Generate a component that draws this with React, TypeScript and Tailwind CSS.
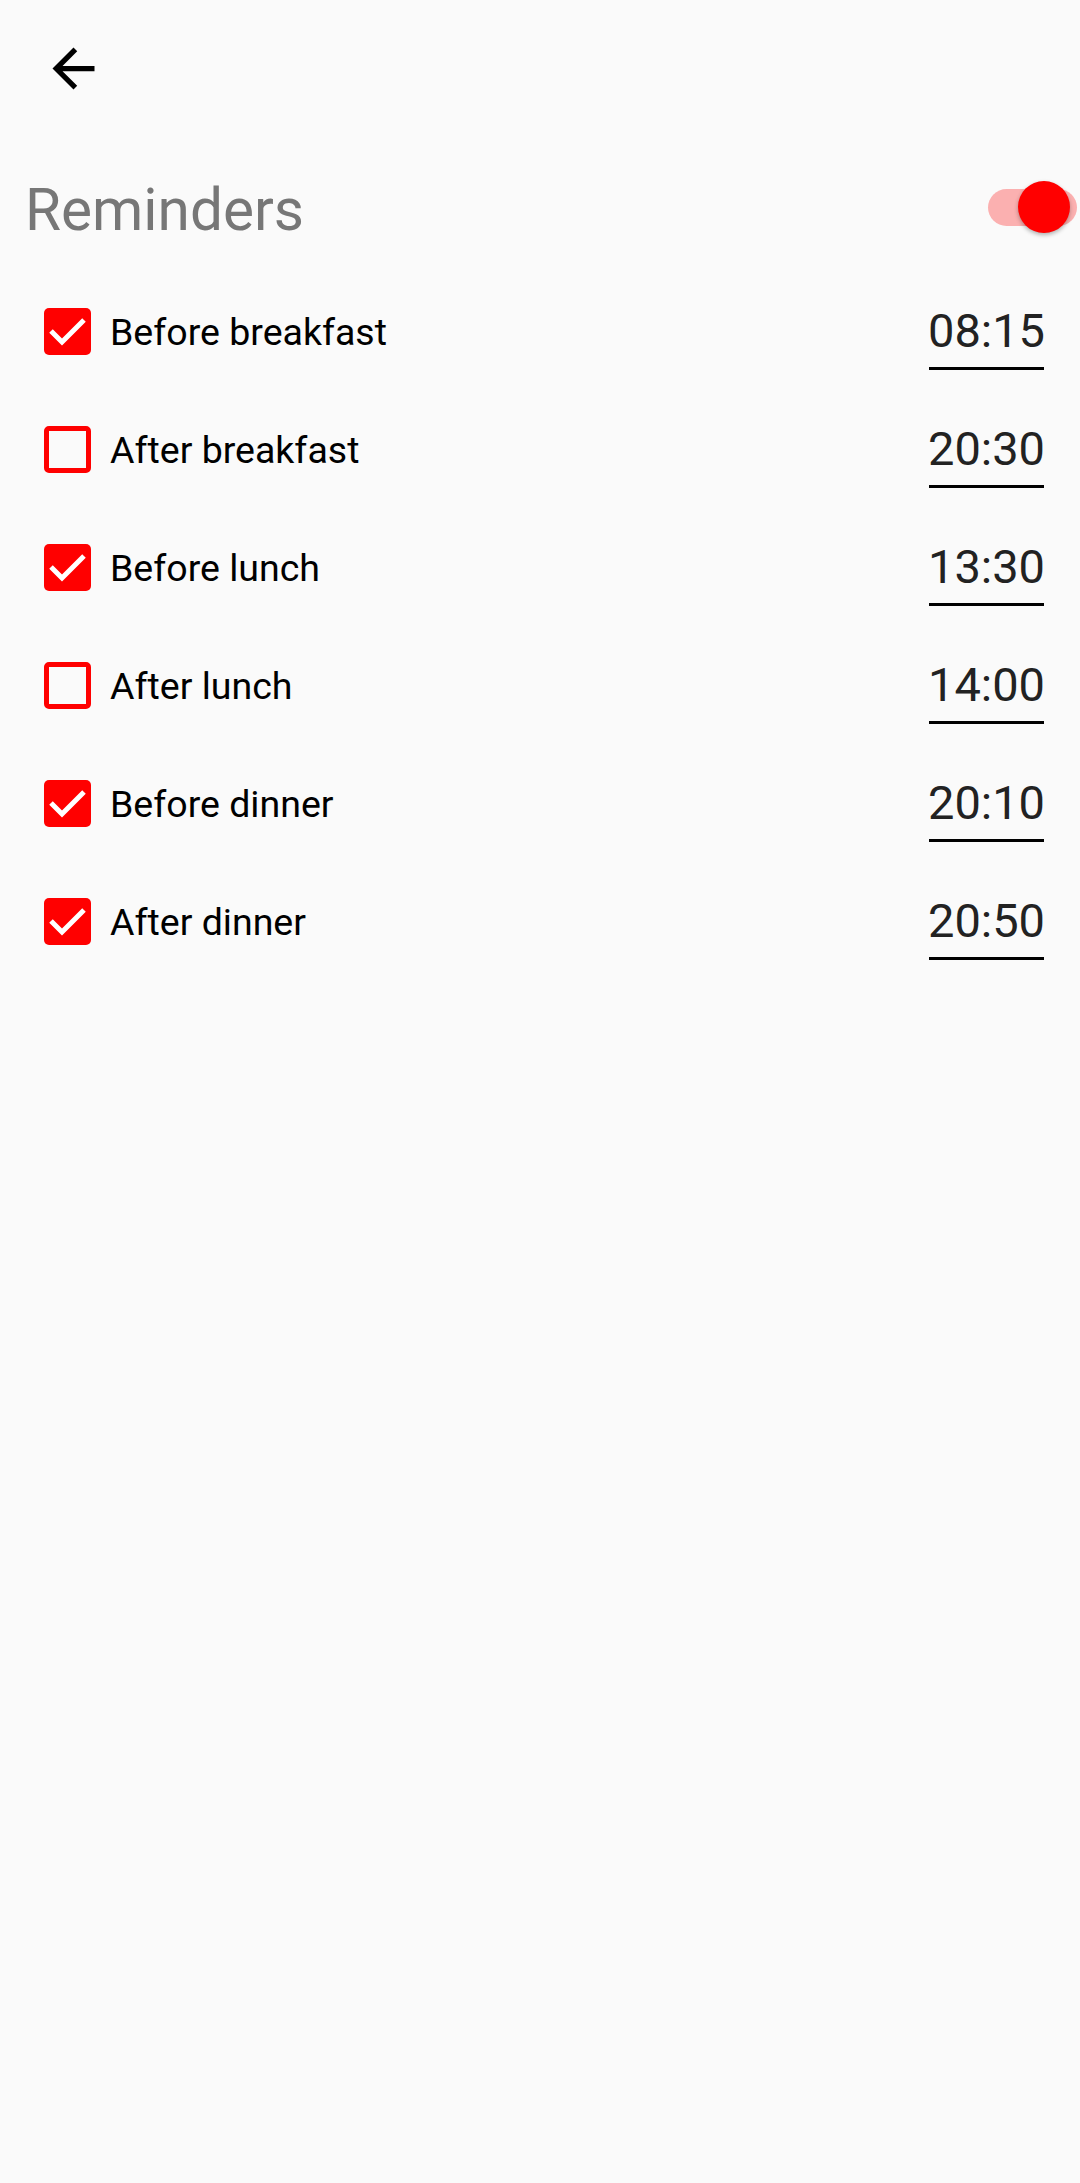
import React from 'react';

interface Reminder {
  label: string;
  time: string;
  checked: boolean;
}

const reminders: Reminder[] = [
  { label: 'Before breakfast', time: '08:15', checked: true },
  { label: 'After breakfast', time: '20:30', checked: false },
  { label: 'Before lunch', time: '13:30', checked: true },
  { label: 'After lunch', time: '14:00', checked: false },
  { label: 'Before dinner', time: '20:10', checked: true },
  { label: 'After dinner', time: '20:50', checked: true },
];

function Checkbox({ checked }: { checked: boolean }) {
  if (!checked) {
    return <div className="w-[47px] h-[47px] shrink-0 rounded-[5px] border-[5px] border-[#ff0000]" />;
  }
  return (
    <div className="w-[47px] h-[47px] shrink-0 rounded-[5px] bg-[#ff0000] flex items-center justify-center">
      <svg width="47" height="47" viewBox="0 0 47 47">
        <polyline points="7,23 18,34 40,12" fill="none" stroke="white" strokeWidth="5" />
      </svg>
    </div>
  );
}

function Toggle() {
  return (
    <div className="relative w-[89px] h-[52px] mb-[6px]">
      <div className="absolute left-0 top-[8px] w-[89px] h-[37px] rounded-full bg-[#fbb0b0]" />
      <div className="absolute right-[7px] top-0 w-[52px] h-[52px] rounded-full bg-[#ff0000] shadow-[0_2px_4px_rgba(0,0,0,0.3)]" />
    </div>
  );
}

function ReminderRow({ item }: { item: Reminder }) {
  return (
    <div className="h-[118px] flex items-center justify-between pl-[44px] pr-[36px]">
      <div className="flex items-center gap-[19px]">
        <Checkbox checked={item.checked} />
        <span className="mt-[1px] text-[37.5px] leading-[44px] text-black">{item.label}</span>
      </div>
      <div className="w-[115px] flex justify-center pt-[11px] pb-[8px] border-b-[3px] border-black">
        <span className="text-[47px] leading-[56px] text-[#222222] whitespace-nowrap">{item.time}</span>
      </div>
    </div>
  );
}

export default function App() {
  return (
    <div className="w-[1080px] h-[2183px] bg-[#fafafa] font-['Roboto',sans-serif]">
      <div className="h-[137px] flex items-center pl-[42px]">
        <svg width="63" height="63" viewBox="0 0 24 24">
          <path d="M20 11H7.83l5.59-5.59L12 4l-8 8 8 8 1.41-1.41L7.83 13H20v-2z" fill="black" />
        </svg>
      </div>

      <div className="mt-[38px] h-[70px] flex items-center justify-between pl-[25px] pr-[3px]">
        <h1 className="text-[58.5px] leading-[70px] text-[#777777] font-normal">Reminders</h1>
        <Toggle />
      </div>

      <div className="mt-[27px] flex flex-col">
        {reminders.map((r) => (
          <ReminderRow key={r.label} item={r} />
        ))}
      </div>
    </div>
  );
}
